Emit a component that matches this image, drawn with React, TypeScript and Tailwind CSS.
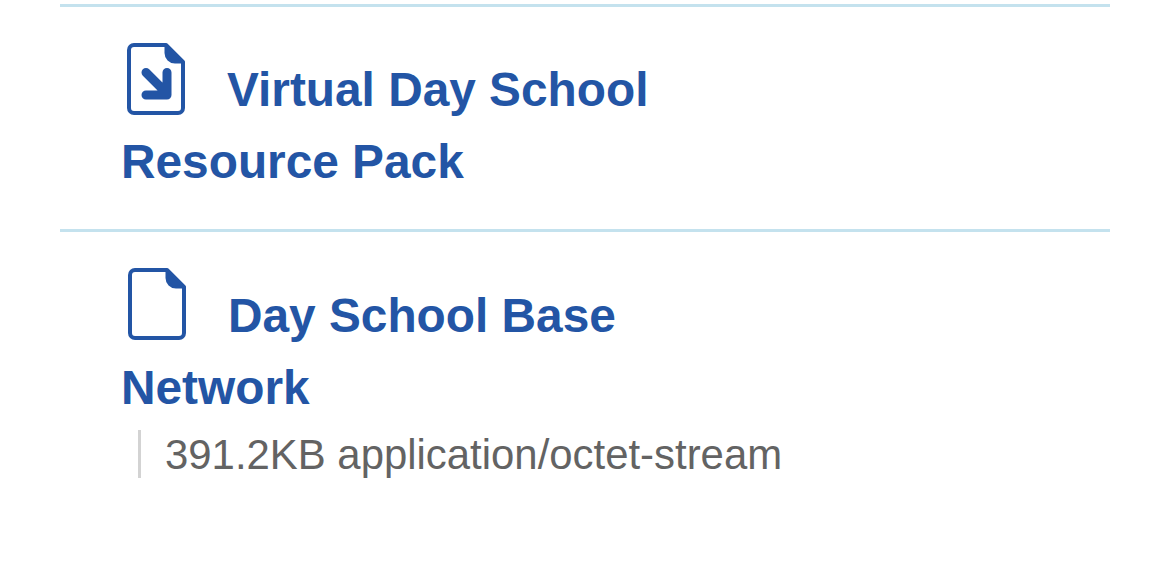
function FileIcon({ arrow }: { arrow?: boolean }) {
  return (
    <svg viewBox="0 0 58 72" className={`w-[58px] h-[72px] inline-block align-baseline mr-[42px] ${arrow ? "mb-[-9px]" : "mb-[-8px]"}`} fill="none">
      <path d="M7 2 H39 L56 19 V65 a5 5 0 0 1 -5 5 H7 a5 5 0 0 1 -5 -5 V7 a5 5 0 0 1 5 -5 Z" stroke="#2355a5" strokeWidth="4" strokeLinejoin="round" />
      <path d="M39 2 L56 19 H48 a9 9 0 0 1 -9 -9 Z" fill="#2355a5" stroke="#2355a5" strokeWidth="3" strokeLinejoin="round" />
      {arrow && (
        <path d="M19 29.500 L38 48.500 M40 29.500 V52 H19" stroke="#2355a5" strokeWidth="9" strokeLinecap="round" strokeLinejoin="round" />
      )}
    </svg>
  );
}

export default function App() {
  return (
    <div className="min-h-[582px] bg-white px-[60px] pt-1 font-['Liberation_Sans',Arial,sans-serif]">
      <div className="border-t-[3px] border-[#c4e2ee] pl-[61px] pt-[36px] h-[225px]">
        <a className="block w-[600px] text-[47.8px] leading-[72px] font-bold text-[#2355a5]">
          <span className="ml-[6px]"><FileIcon arrow /></span>Virtual Day School Resource Pack
        </a>
      </div>
      <div className="border-t-[3px] border-[#c4e2ee] pl-[61px] pt-[36px]">
        <a className="block w-[600px] text-[47.8px] leading-[72px] font-bold text-[#2355a5]">
          <span className="ml-[7px]"><FileIcon /></span>Day School Base Network
        </a>
        <div className="ml-[17px] mt-[6px] h-[48px] pt-[1px] border-l-[3px] border-[#d3d3d3] pl-[24px] text-[41.9px] leading-[48px] text-[#636363]">
          391.2KB application/octet-stream
        </div>
      </div>
    </div>
  );
}
